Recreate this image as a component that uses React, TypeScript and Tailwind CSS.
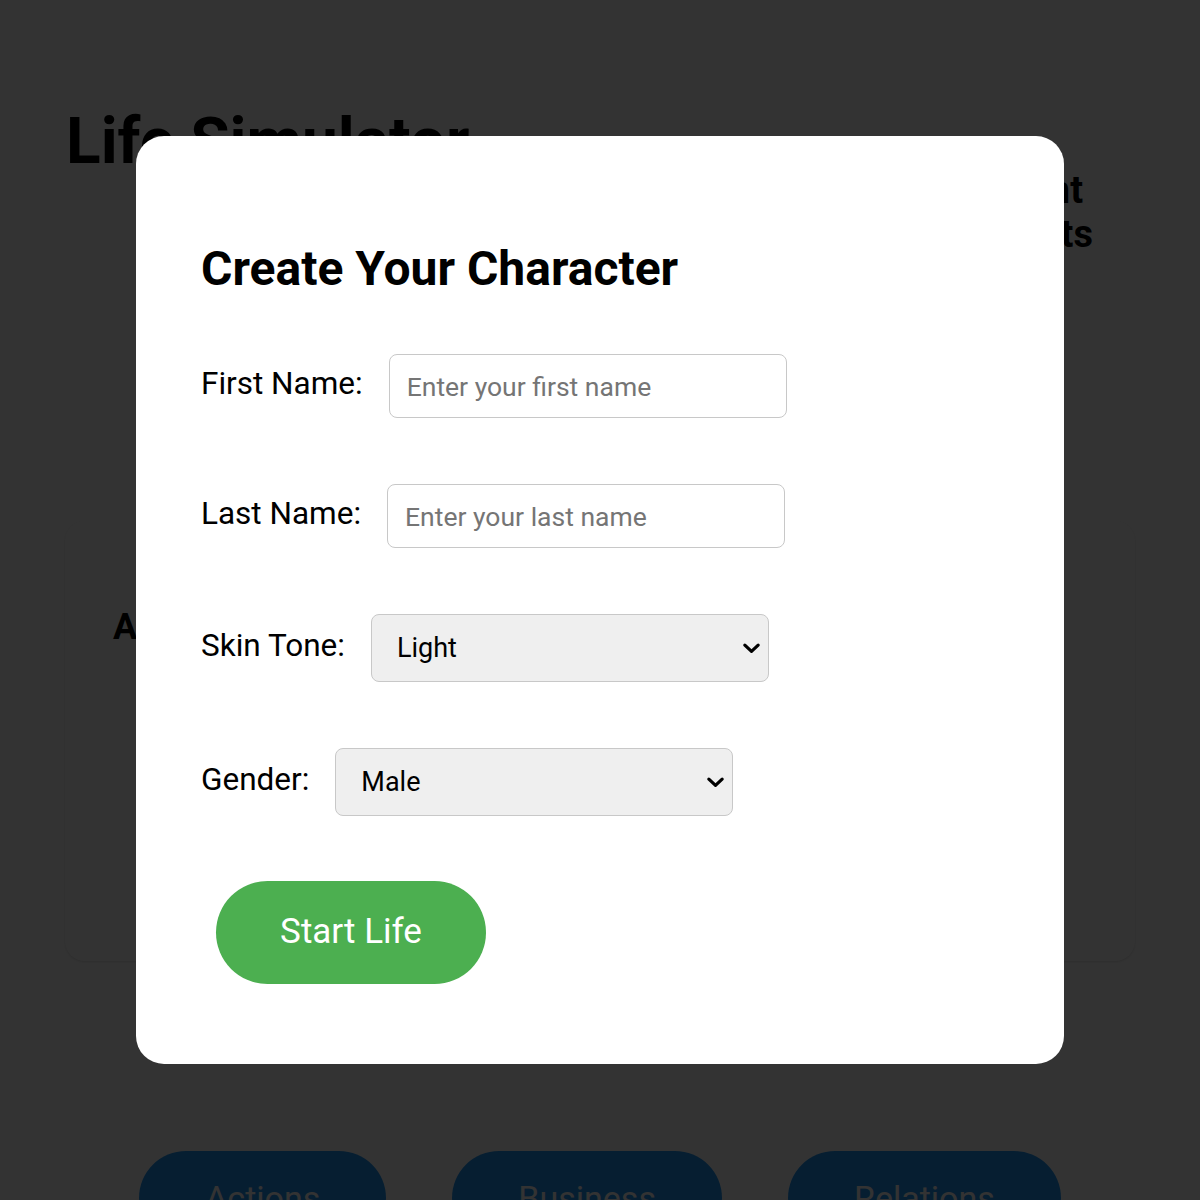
import { useState } from "react";

function Chevron() {
  return (
    <svg
      viewBox="0 0 20 12"
      className="pointer-events-none absolute right-[8px] top-1/2 h-[12px] w-[19px] -translate-y-1/2"
      fill="none"
      stroke="#000"
      strokeWidth={3.4}
      strokeLinecap="round"
      strokeLinejoin="round"
    >
      <path d="M3 3l7 6.5L17 3" />
    </svg>
  );
}

export default function App() {
  const [firstName, setFirstName] = useState("");
  const [lastName, setLastName] = useState("");
  const [skin, setSkin] = useState("Light");
  const [gender, setGender] = useState("Male");

  return (
    <div className="relative min-h-screen overflow-hidden bg-white font-['Roboto',sans-serif] text-black">
      {/* Page behind the modal */}
      <div className="flex items-start justify-between pl-[66px] pr-[107px] pt-[104px]">
        <h1 className="text-[64px] font-bold leading-[75px]">Life Simulator</h1>
        <div className="mt-[64px] flex flex-col items-end text-[38px] font-bold leading-[44px]">
          <span className="pr-[10px]">Employment</span>
          <span>Assets</span>
        </div>
      </div>

      <div className="mx-[65px] mt-[265px] h-[440px] rounded-[20px] bg-white px-[48px] pt-[85px] shadow-sm">
        <h2 className="text-[36px] font-bold leading-[42px]">Age: 0 years</h2>
      </div>

      <div className="mt-[190px] flex justify-center gap-[66px]">
        {["Actions", "Business", "Relations"].map((t) => (
          <button
            key={t}
            className="rounded-[50px] bg-[#2196f3] px-[66px] pb-[27px] pt-[27px] text-[34px] leading-[40px] text-white"
          >
            {t}
          </button>
        ))}
      </div>

      {/* Overlay */}
      <div className="fixed inset-0 flex items-center justify-center bg-black/80">
        <div className="w-[928px] rounded-[28px] bg-white px-[65px] pb-[80px] pt-[104px]">
          <h2 className="text-[48px] font-bold leading-[57px]">Create Your Character</h2>

          <div className="mt-[57px] flex flex-col gap-[66px]">
            <div className="flex items-center gap-[26px]">
              <label className="mb-[5px] text-[31.5px] leading-[37px]">First Name:</label>
              <input
                value={firstName}
                onChange={(e) => setFirstName(e.target.value)}
                placeholder="Enter your first name"
                className="h-[64px] w-[398px] rounded-[8px] border-[1.5px] border-[#c8c8c8] px-[17px] text-[26.5px] outline-none placeholder:text-[#757575]"
              />
            </div>

            <div className="flex items-center gap-[26px]">
              <label className="mb-[5px] text-[31.5px] leading-[37px]">Last Name:</label>
              <input
                value={lastName}
                onChange={(e) => setLastName(e.target.value)}
                placeholder="Enter your last name"
                className="h-[64px] w-[398px] rounded-[8px] border-[1.5px] border-[#c8c8c8] px-[17px] text-[26.5px] outline-none placeholder:text-[#757575]"
              />
            </div>

            <div className="flex items-center gap-[26px]">
              <label className="mb-[5px] text-[31.5px] leading-[37px]">Skin Tone:</label>
              <div className="relative">
                <select
                  value={skin}
                  onChange={(e) => setSkin(e.target.value)}
                  className="h-[68px] w-[398px] appearance-none rounded-[8px] border-[1.5px] border-[#c8c8c8] bg-[#efefef] pl-[25px] text-[27px] outline-none"
                >
                  <option>Light</option>
                  <option>Medium</option>
                  <option>Dark</option>
                </select>
                <Chevron />
              </div>
            </div>

            <div className="flex items-center gap-[26px]">
              <label className="mb-[5px] text-[31.5px] leading-[37px]">Gender:</label>
              <div className="relative">
                <select
                  value={gender}
                  onChange={(e) => setGender(e.target.value)}
                  className="h-[68px] w-[398px] appearance-none rounded-[8px] border-[1.5px] border-[#c8c8c8] bg-[#efefef] pl-[25px] text-[27px] outline-none"
                >
                  <option>Male</option>
                  <option>Female</option>
                </select>
                <Chevron />
              </div>
            </div>
          </div>

          <button className="ml-[15px] mt-[65px] h-[103px] w-[270px] rounded-full bg-[#4caf50] text-[35px] text-white">
            Start Life
          </button>
        </div>
      </div>
    </div>
  );
}
